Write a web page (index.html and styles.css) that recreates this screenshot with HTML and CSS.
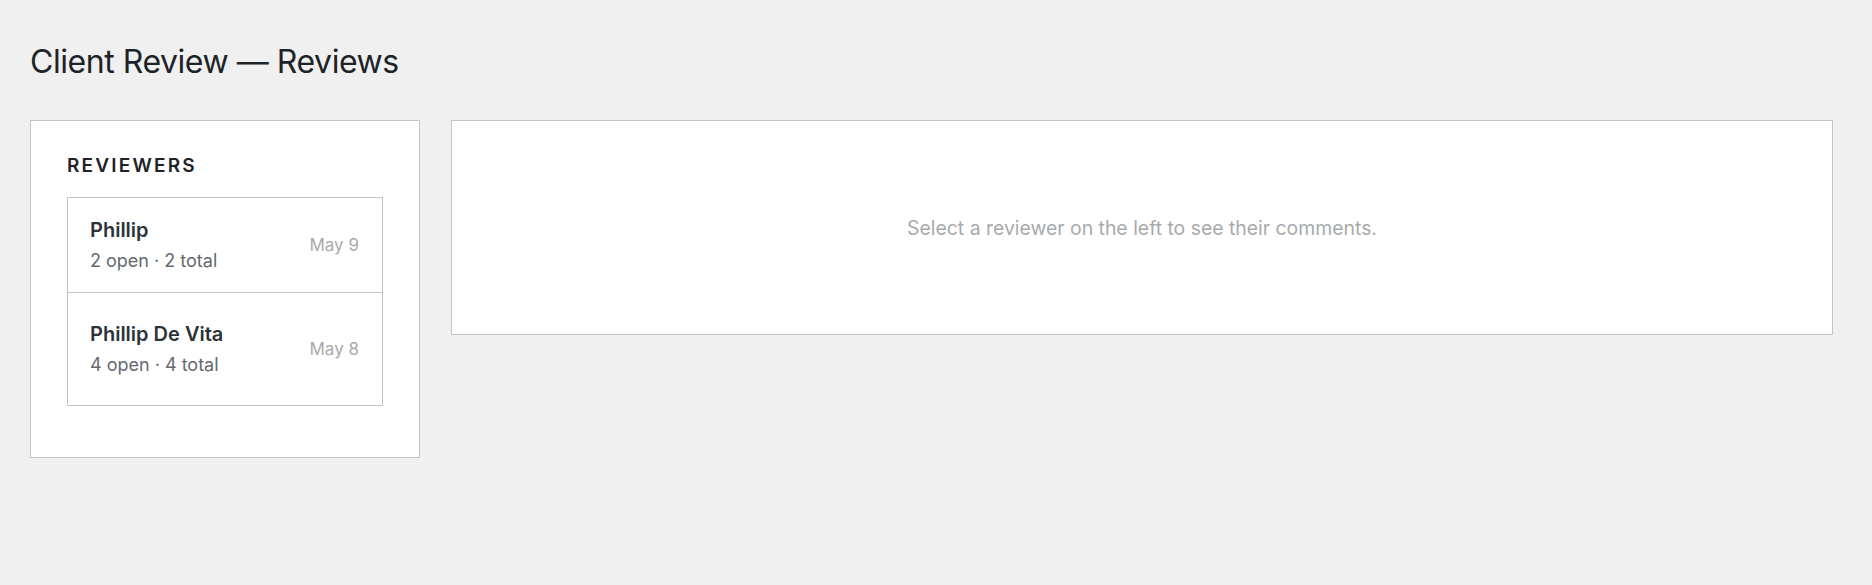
FILE: index.html
```html
<!DOCTYPE html>
<html lang="en">
<head>
<meta charset="utf-8">
<title>Client Review — Reviews</title>
<link rel="stylesheet" href="styles.css">
</head>
<body>
<div class="wrap">
  <h1 class="page-title">Client Review — Reviews</h1>
  <div class="layout">
    <aside class="card reviewers">
      <h2 class="section-title">REVIEWERS</h2>
      <ul class="reviewer-list">
        <li class="reviewer">
          <div class="reviewer-info">
            <div class="reviewer-name">Phillip</div>
            <div class="reviewer-meta">2 open · 2 total</div>
          </div>
          <div class="reviewer-date">May 9</div>
        </li>
        <li class="reviewer reviewer-tall">
          <div class="reviewer-info">
            <div class="reviewer-name">Phillip De Vita</div>
            <div class="reviewer-meta">4 open · 4 total</div>
          </div>
          <div class="reviewer-date">May 8</div>
        </li>
      </ul>
    </aside>
    <section class="card comments">
      <p class="empty">Select a reviewer on the left to see their comments.</p>
    </section>
  </div>
</div>
</body>
</html>
```

FILE: styles.css
```css
* { box-sizing: border-box; }
html, body {
  margin: 0;
  padding: 0;
  background: #f0f0f1;
  font-family: Inter, "Noto Sans", sans-serif;
  color: #1d2327;
}
.wrap {
  padding: 0 39px 0 30px;
}
.page-title {
  margin: 0;
  padding: 39px 0 0;
  font-size: 32px;
  font-weight: 400;
  line-height: 46px;
  color: #1d2327;
  letter-spacing: -0.45px;
}
.layout {
  display: flex;
  align-items: flex-start;
  gap: 31px;
  margin-top: 35px;
}
.card {
  background: #fff;
  border: 1px solid #c3c4c7;
}
.reviewers {
  width: 390px;
  flex: 0 0 390px;
  padding: 32px 36px 51px;
}
.section-title {
  margin: 0 0 18px;
  font-size: 19px;
  font-weight: 600;
  line-height: 26px;
  letter-spacing: 2.2px;
  color: #1d2327;
}
.reviewer-list {
  list-style: none;
  margin: 0;
  padding: 0;
  border: 1px solid #c3c4c7;
}
.reviewer {
  display: flex;
  align-items: center;
  justify-content: space-between;
  padding: 19px 23px 19px 22px;
}
.reviewer + .reviewer {
  border-top: 1px solid #c3c4c7;
}
.reviewer-tall {
  padding-top: 28px;
  padding-bottom: 28px;
}
.reviewer-name {
  font-size: 20px;
  font-weight: 600;
  line-height: 27px;
  color: #2c3338;
}
.reviewer-meta {
  margin-top: 5px;
  font-size: 18px;
  line-height: 24px;
  color: #646970;
}
.reviewer-date {
  font-size: 17px;
  line-height: 24px;
  color: #a7aaad;
}
.comments {
  flex: 1 1 auto;
  height: 215px;
  display: flex;
  align-items: center;
  justify-content: center;
}
.empty {
  margin: 0;
  font-size: 19.4px;
  line-height: 28px;
  color: #a7aaad;
}
```
